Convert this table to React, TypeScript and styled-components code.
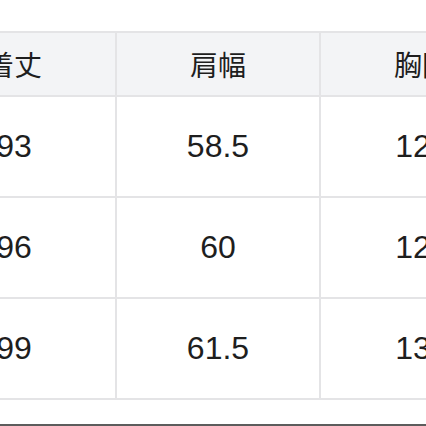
import React from "react";
import styled, { createGlobalStyle } from "styled-components";

const GlobalStyle = createGlobalStyle`
  html, body {
    margin: 0;
    padding: 0;
    background: #ffffff;
    overflow: hidden;
  }
`;

const sizes = [
  { length: "93", shoulder: "58.5", chest: "124" },
  { length: "96", shoulder: "60", chest: "128" },
  { length: "99", shoulder: "61.5", chest: "132" },
];

export default function App() {
  return (
    <>
      <GlobalStyle />
      <Page>
        <SizeTable>
          <HeadCell>着丈</HeadCell>
          <HeadCell>肩幅</HeadCell>
          <HeadCell>胸囲</HeadCell>
          {sizes.map((row) => (
            <React.Fragment key={row.length}>
              <Cell>{row.length}</Cell>
              <Cell>{row.shoulder}</Cell>
              <Cell>{row.chest}</Cell>
            </React.Fragment>
          ))}
        </SizeTable>
        <BottomEdge />
      </Page>
    </>
  );
}

const Page = styled("div")`
  width: 426px;
  height: 426px;
  display: flex;
  flex-direction: column;
  overflow: hidden;
  padding-top: 31px;
  box-sizing: border-box;
`;

const SizeTable = styled("div")`
  display: grid;
  grid-template-columns: repeat(3, 202px);
  grid-template-rows: 62px repeat(3, 99px);
  gap: 2px;
  padding: 2px;
  margin-left: -89px;
  width: max-content;
  background: #e4e4e6;
`;

const HeadCell = styled("div")`
  display: flex;
  justify-content: center;
  align-items: center;
  background: #f3f4f6;
  color: #1e1e1e;
  font-family: "Noto Sans CJK JP", sans-serif;
  font-size: 28px;
`;

const Cell = styled("div")`
  display: flex;
  justify-content: center;
  align-items: center;
  background: #ffffff;
  color: #1e1e1e;
  font-family: "Liberation Sans", Arial, sans-serif;
  font-size: 32px;
`;

const BottomEdge = styled("div")`
  margin-top: auto;
  height: 2px;
  background: #5c5c5c;
`;
